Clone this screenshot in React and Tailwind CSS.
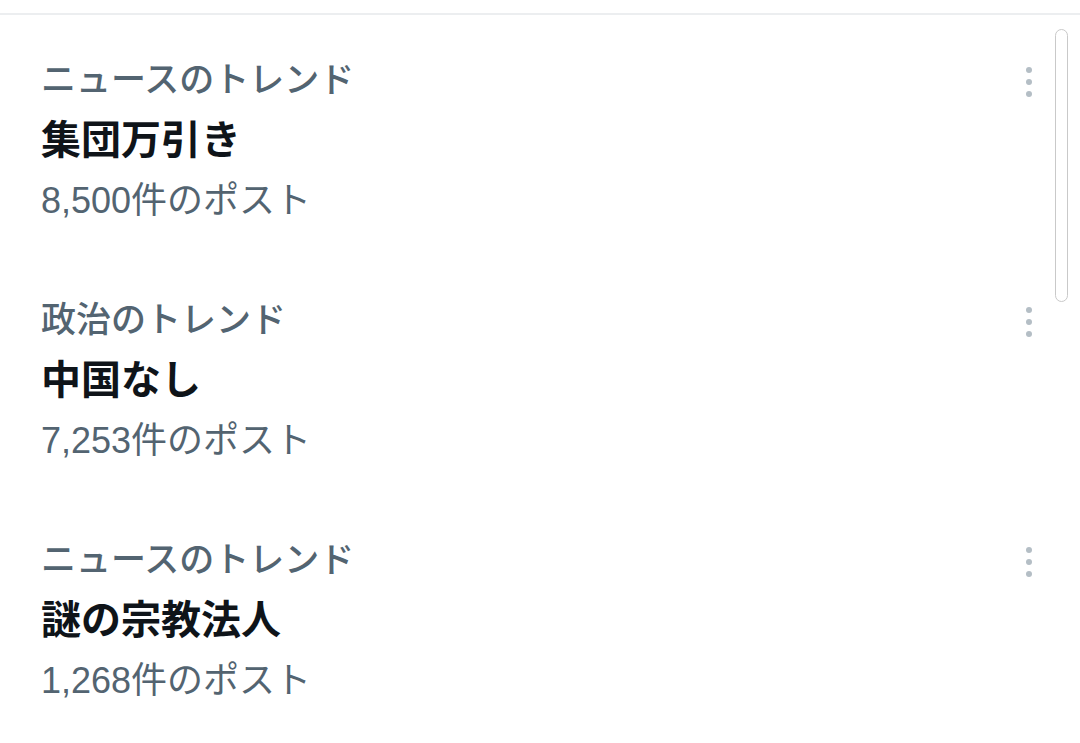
import React from 'react'

const trends = [
  { category: 'ニュースのトレンド', title: '集団万引き', count: '8,500件のポスト' },
  { category: '政治のトレンド', title: '中国なし', count: '7,253件のポスト' },
  { category: 'ニュースのトレンド', title: '謎の宗教法人', count: '1,268件のポスト' },
]

function MoreDots() {
  return (
    <div className="flex flex-col items-center gap-[6px] pt-[2px]">
      <span className="block w-[6px] h-[6px] rounded-full bg-[#b4bec5]"></span>
      <span className="block w-[6px] h-[6px] rounded-full bg-[#b4bec5]"></span>
      <span className="block w-[6px] h-[6px] rounded-full bg-[#b4bec5]"></span>
    </div>
  )
}

function TrendItem({ category, title, count }) {
  return (
    <div className="flex items-start justify-between pl-[41px] pr-[48px] pb-[57px]">
      <div className="flex flex-col">
        <div className="h-[61px] flex items-center text-[35px] font-medium text-[#536471]">{category}</div>
        <div className="h-[58px] flex items-center text-[40px] font-bold text-[#0f1419]">{title}</div>
        <div className="h-[64px] flex items-center text-[36px] text-[#536471]">{count}</div>
      </div>
      <div className="h-[61px] flex items-center">
        <MoreDots />
      </div>
    </div>
  )
}

export default function App() {
  return (
    <div
      className="relative w-[1080px] h-[743px] bg-white overflow-hidden"
      style={{ fontFamily: '"Liberation Sans", "Noto Sans CJK JP", sans-serif' }}
    >
      <div className="h-[13px]"></div>
      <div className="h-[2px] bg-[#eceef0]"></div>
      <div className="pt-[35px]">
        {trends.map((t, i) => (
          <TrendItem key={i} {...t} />
        ))}
      </div>
      {/* scrollbar thumb */}
      <div className="absolute left-[1055px] top-[29px] w-[13px] h-[273px] rounded-full border border-[#c9c9c9] bg-white"></div>
    </div>
  )
}
